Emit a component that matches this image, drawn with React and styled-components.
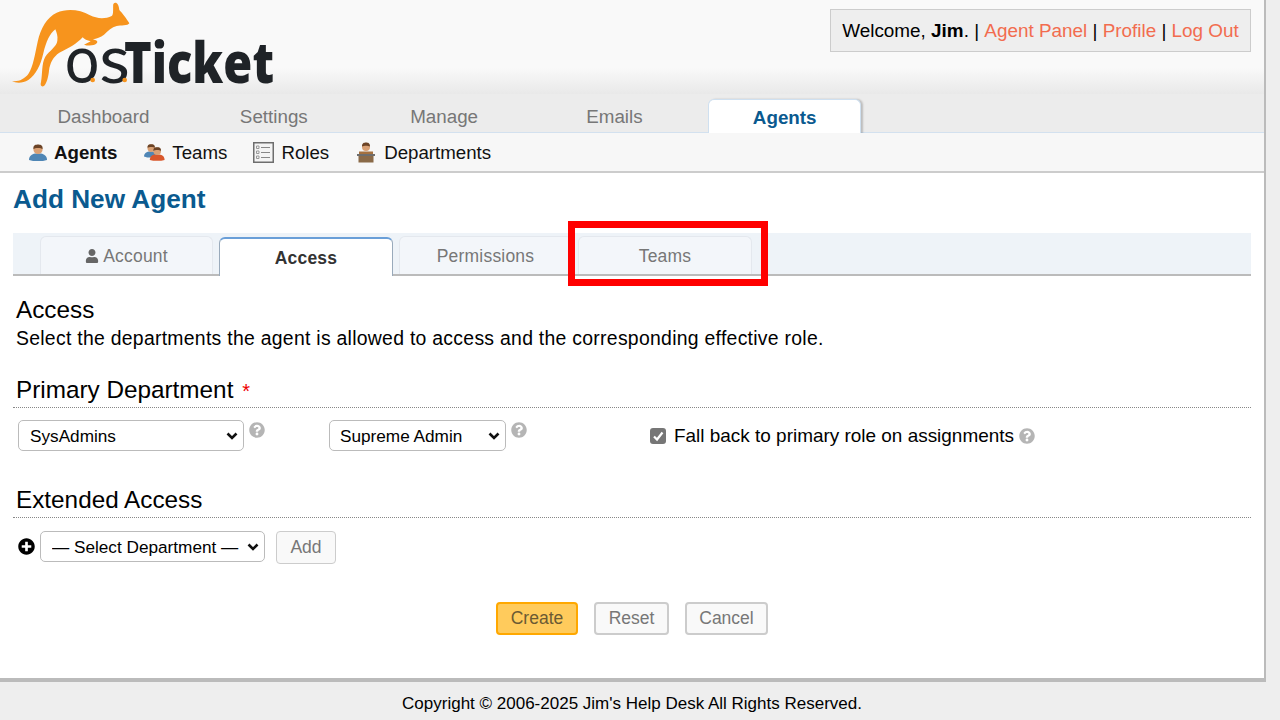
import React from 'react'
import styled, { createGlobalStyle } from 'styled-components'
import { FaUser, FaQuestionCircle, FaPlusCircle } from 'react-icons/fa'

const chevron = encodeURIComponent('<svg xmlns="http://www.w3.org/2000/svg" width="12" height="8" viewBox="0 0 12 8"><path d="M1.5 1.5 L6 6 L10.5 1.5" fill="none" stroke="#111" stroke-width="2.6"/></svg>')

const GlobalStyle = createGlobalStyle`
html, body {
  margin: 0;
  padding: 0;
  background: #eee;
  font-family: "Liberation Sans", Arial, sans-serif;
  color: #000;
}
* {
  box-sizing: border-box;
}
`

const Page = styled.div`
width: 1280px;
height: 720px;
display: flex;
flex-direction: column;
`

const Container = styled.div`
width: 1266px;
height: 682px;
flex: none;
display: flex;
flex-direction: column;
background: #fff;
border-right: 2px solid #bbb;
border-bottom: 4px solid #bbb;
`

const Header = styled.header`
height: 94px;
flex: none;
display: flex;
justify-content: space-between;
align-items: flex-start;
padding: 9px 13px 0 12px;
background: linear-gradient(#f9f9f9 72%, #e9e9e9 100%);
`

const Logo = styled.svg`
display: block;
margin: -9px 0 0 -12px;
`

const Welcome = styled.div`
width: 421px;
height: 43px;
display: flex;
align-items: center;
justify-content: center;
background: #eee;
border: 1px solid #ccc;
font-size: 18.9px;
white-space: pre;
`

const Link = styled.span`
color: #f26c4f;
`

const Nav = styled.nav`
height: 39px;
flex: none;
display: flex;
gap: 17.3px;
padding: 5px 0 0 27px;
background: #ececec;
border-bottom: 1px solid #d3e1ef;
`

const NavItem = styled.div`
width: 153px;
height: ${props => props.active ? "35px" : "34px"};
display: flex;
align-items: center;
justify-content: center;
padding-top: 2px;
font-size: 18.8px;
border-radius: 6px 6px 0 0;
font-weight: ${props => props.active ? "700" : "400"};
color: ${props => props.active ? "#0a5a8f" : "#777"};
background: ${props => props.active ? "#fff" : "transparent"};
border: ${props => props.active ? "1px solid #cfe0f0" : "none"};
border-bottom: none;
box-shadow: ${props => props.active ? "2px 0 2px rgba(0,0,0,.2)" : "none"};
`

const SubNav = styled.div`
height: 40px;
flex: none;
display: flex;
align-items: center;
padding: 1px 0 0 28px;
background: #f7f7f7;
border-bottom: 2px solid #ccc;
`

const SubItem = styled.div`
display: flex;
align-items: center;
gap: ${props => props.gap}px;
margin-right: ${props => props.space}px;
font-size: 18.7px;
color: #111;
font-weight: ${props => props.active ? "700" : "400"};
`

const Content = styled.main`
flex: 1;
padding: 0 13px;
`

const Title = styled.h1`
margin: 11px 0 0;
height: 30px;
line-height: 30px;
font-size: 26.2px;
font-weight: 700;
color: #0a5a8f;
`

const TabBar = styled.div`
position: relative;
margin-top: 19px;
height: 43px;
display: flex;
gap: 6px;
align-items: flex-end;
padding-left: 27px;
background: #eef3f8;
border-bottom: 2px solid #bbb;
`

const Tab = styled.div`
width: ${props => props.w}px;
height: ${props => props.active ? "39px" : "38px"};
margin-bottom: ${props => props.active ? "-2px" : "0"};
display: flex;
align-items: center;
justify-content: center;
gap: 4px;
padding-top: ${props => props.active ? "2px" : "1px"};
font-size: 17.5px;
letter-spacing: 0.2px;
font-weight: ${props => props.active ? "700" : "400"};
color: ${props => props.active ? "#333" : "#777"};
background: ${props => props.active ? "#fff" : "#f3f6fa"};
border: 1px solid #e4e8ee;
border-bottom: none;
border-top: ${props => props.active ? "2px solid #6a9fd8" : "1px solid #e4e8ee"};
border-left-color: ${props => props.active ? "#9ab" : "#e4e8ee"};
border-right-color: ${props => props.active ? "#9ab" : "#e4e8ee"};
border-radius: 6px 6px 0 0;
`

const Highlight = styled.div`
position: absolute;
left: 555px;
top: -12px;
width: 200px;
height: 65px;
border: 7px solid #f00;
`

const Section = styled.div`
padding-left: 3px;
`

const SectionTitle = styled.div`
margin-top: 20px;
font-size: 24.3px;
line-height: 28px;
`

const Description = styled.div`
font-size: 19.4px;
line-height: 22px;
margin-top: 3px;
letter-spacing: 0.28px;
`

const FieldHead = styled.div`
margin-top: ${props => props.top}px;
height: ${props => props.h}px;
padding-left: 3px;
font-size: 24.3px;
line-height: 28px;
border-bottom: 1px dotted #888;
`

const Required = styled.span`
margin-left: 2px;
color: #e00;
font-size: 20px;
`

const Row = styled.div`
display: flex;
align-items: flex-start;
`

const PrimaryRow = styled(Row)`
margin-top: 12px;
padding-left: 5px;
height: 31px;
`

const Select = styled.select`
appearance: none;
width: ${props => props.w}px;
height: 31px;
margin-left: ${props => props.left || 0}px;
padding: 0 0 0 ${props => props.pad || 11}px;
font-family: "Liberation Sans", Arial, sans-serif;
font-size: 17.2px;
color: #000;
background: #fff url("data:image/svg+xml,${chevron}") no-repeat right 5px center;
border: 1px solid #bbb;
border-radius: 5px;
`

const Help = styled(FaQuestionCircle)`
display: block;
flex: none;
width: 16px;
height: 16px;
color: #b5b5b5;
margin-left: ${props => props.left || 5}px;
margin-top: ${props => props.top || 0}px;
`

const CheckLabel = styled.label`
display: flex;
align-items: center;
height: 31px;
margin-left: 123px;
font-size: 18.95px;
`

const CheckBox = styled.span`
width: 16px;
height: 16px;
margin-right: 8px;
border-radius: 3px;
background: #767676;
display: flex;
align-items: center;
justify-content: center;
`

const AddRow = styled(Row)`
margin-top: 13px;
padding-left: 5px;
`

const Plus = styled(FaPlusCircle)`
display: block;
flex: none;
width: 17px;
height: 17px;
margin: 7px 5px 0 0;
color: #000;
`

const Button = styled.button`
height: 33px;
width: ${props => props.w}px;
margin-left: ${props => props.left || 0}px;
padding: 0;
font-family: "Liberation Sans", Arial, sans-serif;
font-size: 17.5px;
color: ${props => props.primary ? "#6b5a33" : "#777"};
background: ${props => props.primary ? "#ffcb5c" : "#f9f9f9"};
border: 2px solid ${props => props.primary ? "#ffa800" : "#ccc"};
border-width: ${props => props.thin ? "1px" : "2px"};
border-radius: 4px;
`

const Actions = styled.div`
margin-top: 38px;
display: flex;
justify-content: center;
gap: 16px;
`

const Footer = styled.footer`
flex: 1;
display: flex;
align-items: center;
justify-content: center;
padding: 6px 16px 0 0;
font-size: 17px;
background: #eee;
`

// osTicket logo, the word stays as one svg text
function OsTicketLogo() {
  return (
    <Logo width="300" height="94" viewBox="0 0 900 282">
      <path
        fill="#f7941d"
        d="M36 243 C55 246 72 238 85 222 C100 200 105 160 113 125 C122 85 140 52 170 38 C200 25 240 28 270 46 C290 56 315 58 335 48 C342 44 338 20 340 12 C346 4 356 8 358 30 C366 38 380 56 388 70 C384 78 362 76 350 78 C335 82 325 92 312 104 C302 112 290 116 278 118 C288 120 296 124 290 130 C284 138 262 138 252 134 L272 124 C262 122 252 118 248 112 C232 130 205 146 178 158 C160 170 150 188 147 212 C145 232 140 250 132 258 C124 262 120 256 123 246 C128 220 124 192 136 170 C148 152 170 140 172 122 C174 108 170 98 166 88 C150 100 138 125 130 160 C122 195 108 225 85 240 C68 250 48 250 36 243 Z"
      />
      <text y="250" fill="#1f2327">
        <tspan x="194" fontFamily="Lato, sans-serif" fontWeight="400" fontSize="205" textLength="104" lengthAdjust="spacingAndGlyphs">o</tspan>
        <tspan x="298" fontFamily="Lato, sans-serif" fontWeight="400" fontSize="205" textLength="92" lengthAdjust="spacingAndGlyphs">s</tspan>
        <tspan x="372" fontFamily="'Open Sans', sans-serif" fontWeight="800" fontSize="172" textLength="450" lengthAdjust="spacingAndGlyphs">Ticket</tspan>
      </text>
      <circle cx="278" cy="240" r="7" fill="#f7941d" />
      <circle cx="374" cy="240" r="7" fill="#f7941d" />
    </Logo>
  )
}

function Person({ shirt = "#4f86b5", x = 0, y = 0 }) {
  return (
    <g transform={`translate(${x} ${y})`}>
      <path fill={shirt} d="M1 17 C1 13 4 11 7 10.5 L13 10.5 C16 11 19 13 19 17 L15 18 L5 18 Z" />
      <circle cx="10" cy="6.5" r="4.6" fill="#d9a074" />
      <path fill="#6b4326" d="M5.4 6 C5 2 8 1.5 10 1.5 C12 1.5 15 2 14.6 6 C13 4.5 7 4.5 5.4 6 Z" />
    </g>
  )
}

function AgentIcon() {
  return (
    <svg width="20" height="20" viewBox="0 0 20 20">
      <Person />
    </svg>
  )
}

function TeamIcon() {
  return (
    <svg width="21" height="20" viewBox="0 0 21 20">
      <g transform="scale(.8)">
        <Person x="-1" y="0" />
      </g>
      <g transform="translate(5 3) scale(.82)">
        <Person shirt="#d9572b" />
      </g>
    </svg>
  )
}

function RolesIcon() {
  return (
    <svg width="21" height="21" viewBox="0 0 21 21">
      <rect x="0.75" y="0.75" width="19.5" height="19.5" fill="#f4f4f4" stroke="#6e6e6e" strokeWidth="1.5" />
      <path stroke="#888" strokeWidth="1.2" d="M8 5.5h9M8 10.5h9M8 15.5h9" />
      <path fill="none" stroke="#999" d="M3.5 4h2.5v2.5h-2.5zM3.5 9h2.5v2.5h-2.5zM3.5 14h2.5v2.5h-2.5z" />
    </svg>
  )
}

function DepartmentIcon() {
  return (
    <svg width="20" height="21" viewBox="0 0 20 21">
      <circle cx="10" cy="5" r="4" fill="#d9a074" />
      <path fill="#6b4326" d="M6 4.5 C6 1 8 .5 10 .5 C12 .5 14 1 14 4.5 C12 3.5 8 3.5 6 4.5 Z" />
      <path fill="#a5713f" d="M3 9.5 H17 V12 H3 Z" />
      <rect x="1" y="12" width="18" height="2" fill="#6d6d6d" />
      <rect x="2.5" y="14" width="15" height="6.5" fill="#8a6a48" />
    </svg>
  )
}

function App() {
  return (
    <>
      <GlobalStyle />
      <Page>
        <Container>
          <Header>
            <OsTicketLogo />
            <Welcome>
              Welcome, <b>Jim</b>. | <Link>Agent Panel</Link> | <Link>Profile</Link> | <Link>Log Out</Link>
            </Welcome>
          </Header>
          <Nav>
            <NavItem>Dashboard</NavItem>
            <NavItem>Settings</NavItem>
            <NavItem>Manage</NavItem>
            <NavItem>Emails</NavItem>
            <NavItem active>Agents</NavItem>
          </Nav>
          <SubNav>
            <SubItem active gap={6} space={27}><AgentIcon />Agents</SubItem>
            <SubItem gap={7} space={26}><TeamIcon />Teams</SubItem>
            <SubItem gap={7} space={27}><RolesIcon />Roles</SubItem>
            <SubItem gap={8} space={0}><DepartmentIcon />Departments</SubItem>
          </SubNav>
          <Content>
            <Title>Add New Agent</Title>
            <TabBar>
              <Tab w={173}><FaUser size={14} color="#666" />Account</Tab>
              <Tab w={174} active>Access</Tab>
              <Tab w={173}>Permissions</Tab>
              <Tab w={174}>Teams</Tab>
              <Highlight />
            </TabBar>
            <Section>
              <SectionTitle>Access</SectionTitle>
              <Description>Select the departments the agent is allowed to access and the corresponding effective role.</Description>
            </Section>
            <FieldHead top={27} h={32}>Primary Department <Required>*</Required></FieldHead>
            <PrimaryRow>
              <Select w={226} defaultValue="SysAdmins"><option>SysAdmins</option></Select>
              <Help top={2} left={5} />
              <Select w={177} left={64} pad={10} defaultValue="Supreme Admin"><option>Supreme Admin</option></Select>
              <Help top={2} left={5} />
              <CheckLabel>
                <CheckBox>
                  <svg width="12" height="12" viewBox="0 0 12 12"><path d="M2 6.5 L5 9.5 L10.5 2.5" fill="none" stroke="#fff" strokeWidth="2.2" /></svg>
                </CheckBox>
                Fall back to primary role on assignments
                <Help left={5} />
              </CheckLabel>
            </PrimaryRow>
            <FieldHead top={35} h={32}>Extended Access</FieldHead>
            <AddRow>
              <Plus />
              <Select w={225} defaultValue="sel"><option value="sel">— Select Department —</option></Select>
              <Button w={60} left={11} thin>Add</Button>
            </AddRow>
            <Actions>
              <Button primary w={82}>Create</Button>
              <Button w={75}>Reset</Button>
              <Button w={83}>Cancel</Button>
            </Actions>
          </Content>
        </Container>
        <Footer>Copyright © 2006-2025 Jim's Help Desk All Rights Reserved.</Footer>
      </Page>
    </>
  )
}

export default App
